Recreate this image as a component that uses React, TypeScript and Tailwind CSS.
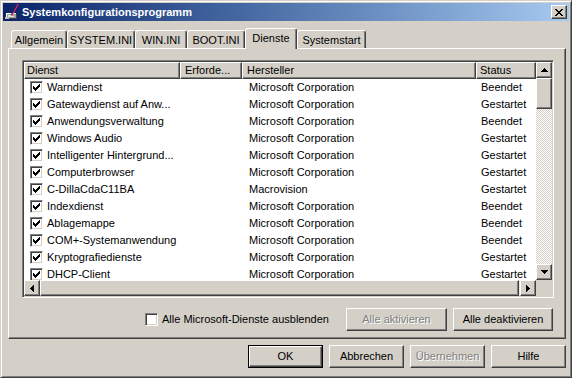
const rows = [
  { name: "Warndienst", maker: "Microsoft Corporation", status: "Beendet" },
  { name: "Gatewaydienst auf Anw...", maker: "Microsoft Corporation", status: "Gestartet" },
  { name: "Anwendungsverwaltung", maker: "Microsoft Corporation", status: "Beendet" },
  { name: "Windows Audio", maker: "Microsoft Corporation", status: "Gestartet" },
  { name: "Intelligenter Hintergrund...", maker: "Microsoft Corporation", status: "Gestartet" },
  { name: "Computerbrowser", maker: "Microsoft Corporation", status: "Gestartet" },
  { name: "C-DillaCdaC11BA", maker: "Macrovision", status: "Gestartet" },
  { name: "Indexdienst", maker: "Microsoft Corporation", status: "Beendet" },
  { name: "Ablagemappe", maker: "Microsoft Corporation", status: "Beendet" },
  { name: "COM+-Systemanwendung", maker: "Microsoft Corporation", status: "Beendet" },
  { name: "Kryptografiedienste", maker: "Microsoft Corporation", status: "Gestartet" },
  { name: "DHCP-Client", maker: "Microsoft Corporation", status: "Gestartet" },
];

const tabs = [
  { label: "Allgemein", w: "w-[56px]" },
  { label: "SYSTEM.INI", w: "w-[68px]" },
  { label: "WIN.INI", w: "w-[52px]" },
  { label: "BOOT.INI", w: "w-[58px]" },
  { label: "Dienste", w: "w-[52px]", active: true },
  { label: "Systemstart", w: "w-[69px]" },
];

// classic 3d frames
const raised =
  "bg-[#d4d0c8] border border-t-white border-l-white border-r-[#404040] border-b-[#404040] shadow-[inset_-1px_-1px_0_#808080]";
const sunken =
  "border border-t-[#808080] border-l-[#808080] border-r-white border-b-white shadow-[inset_1px_1px_0_#404040,inset_-1px_-1px_0_#d4d0c8]";
const track =
  "bg-[image:repeating-conic-gradient(#d4d0c8_0%_25%,#ffffff_0%_50%)] bg-[length:2px_2px]";

const CheckMark = () => (
  <svg width="7" height="7" viewBox="0 0 7 7" shapeRendering="crispEdges">
    <path
      d="M0 2h1v3H0zM1 3h1v3H1zM2 4h1v3H2zM3 3h1v3H3zM4 2h1v3H4zM5 1h1v3H5zM6 0h1v3H6z"
      fill="#000"
    />
  </svg>
);

const Checkbox = ({ checked }: { checked: boolean }) => (
  <div
    className={`w-[13px] h-[13px] shrink-0 bg-white flex items-center justify-center ${sunken}`}
  >
    {checked && <CheckMark />}
  </div>
);

const Arrow = ({ dir }: { dir: "up" | "down" | "left" | "right" }) => {
  const paths = {
    up: "M3 0h1v1H3zM2 1h3v1H2zM1 2h5v1H1zM0 3h7v1H0z",
    down: "M0 0h7v1H0zM1 1h5v1H1zM2 2h3v1H2zM3 3h1v1H3z",
    left: "M3 0h1v7H3zM2 1h1v5H2zM1 2h1v3H1zM0 3h1v1H0z",
    right: "M0 0h1v7H0zM1 1h1v5H1zM2 2h1v3H2zM3 3h1v1H3z",
  };
  const vertical = dir === "up" || dir === "down";
  return (
    <svg
      width={vertical ? 7 : 4}
      height={vertical ? 4 : 7}
      viewBox={vertical ? "0 0 7 4" : "0 0 4 7"}
      shapeRendering="crispEdges"
    >
      <path d={paths[dir]} fill="#000" />
    </svg>
  );
};

const ScrollButton = ({ dir }: { dir: "up" | "down" | "left" | "right" }) => (
  <div className={`w-[16px] h-[16px] shrink-0 flex items-center justify-center ${raised}`}>
    <Arrow dir={dir} />
  </div>
);

const Button = ({
  label,
  w,
  disabled,
  isDefault,
}: {
  label: string;
  w: string;
  disabled?: boolean;
  isDefault?: boolean;
}) => (
  <div className={`${w} h-[23px] shrink-0 ${isDefault ? "border border-black" : ""}`}>
    <div
      className={`w-full h-full flex items-center justify-center ${raised} ${
        disabled ? "text-[#808080] [text-shadow:1px_1px_0_#ffffff]" : ""
      }`}
    >
      {label}
    </div>
  </div>
);

const AppIcon = () => (
  <svg width="16" height="16" viewBox="0 0 16 16" shapeRendering="crispEdges">
    <path d="M2 9h10v5H2z" fill="#a0a0a0" />
    <path d="M2 9h10v1H2zM2 9h1v5H2z" fill="#ffffff" />
    <path d="M3 14h10v1H3zM12 10h1v5h-1z" fill="#404040" />
    <path d="M4 11h3v1H4zM4 12h6v1H4z" fill="#e0e0e0" />
    <path d="M1 13h4v2H1z" fill="#c0c0c0" />
    <path d="M14 0l-6 11" stroke="#e0208a" strokeWidth="1.5" shapeRendering="auto" />
    <path d="M13 0l-6 11" stroke="#202020" strokeWidth="0.8" shapeRendering="auto" />
  </svg>
);

const CloseGlyph = () => (
  <svg width="8" height="7" viewBox="0 0 8 7" shapeRendering="crispEdges">
    <path
      d="M0 0h2v1H0zM6 0h2v1H6zM1 1h2v1H1zM5 1h2v1H5zM2 2h4v1H2zM3 3h2v1H3zM2 4h4v1H2zM1 5h2v1H1zM5 5h2v1H5zM0 6h2v1H0zM6 6h2v1H6z"
      fill="#000"
    />
  </svg>
);

export default function App() {
  return (
    <div className="w-[574px] h-[384px] bg-white font-['Liberation_Sans',Arial,sans-serif] text-[11px] text-black leading-none">
      <div className="w-[572px] h-[378px] bg-[#d4d0c8] border border-t-[#d4d0c8] border-l-[#d4d0c8] border-r-[#404040] border-b-[#404040] shadow-[inset_1px_1px_0_#ffffff,inset_-1px_-1px_0_#808080] p-[2px] flex flex-col">
        {/* Title bar */}
        <div className="h-[18px] shrink-0 bg-gradient-to-r from-[#0a246a] to-[#a6caf0] flex items-center pl-[1px] pr-[2px]">
          <AppIcon />
          <span className="ml-[2px] text-white font-bold text-[11px]">
            Systemkonfigurationsprogramm
          </span>
          <div className={`ml-auto w-[16px] h-[14px] flex items-center justify-center ${raised}`}>
            <CloseGlyph />
          </div>
        </div>

        <div className="flex flex-col pl-[5px] pr-[3px]">
          {/* Tabs */}
          <div className="mt-[7px] h-[20px] flex items-end pl-[3px]">
            {tabs.map((t) =>
              t.active ? (
                <div
                  key={t.label}
                  className={`${t.w} h-[21px] -mb-[1px] relative z-10 bg-[#d4d0c8] border-t border-l border-t-white border-l-white border-r border-r-[#404040] shadow-[inset_-1px_0_0_#808080] rounded-t-[3px] flex items-start justify-center pt-[4px]`}
                >
                  {t.label}
                </div>
              ) : (
                <div
                  key={t.label}
                  className={`${t.w} h-[18px] bg-[#d4d0c8] border-t border-l border-t-white border-l-white border-r border-r-[#404040] shadow-[inset_-1px_0_0_#808080] rounded-t-[3px] flex items-center justify-center pt-[1px]`}
                >
                  {t.label}
                </div>
              )
            )}
          </div>

          {/* Tab panel */}
          <div className="h-[291px] border border-t-white border-l-white border-r-[#404040] border-b-[#404040] shadow-[inset_-1px_-1px_0_#808080] pl-[13px] pt-[11px] flex flex-col">
            {/* List view */}
            <div className={`w-[532px] h-[238px] p-[1px] ${sunken}`}>
              <div className="w-full h-full flex flex-col">
                <div className="h-[218px] flex">
                  <div className="flex-1 bg-white overflow-hidden flex flex-col">
                    {/* header */}
                    <div className="h-[17px] shrink-0 flex">
                      <div className={`w-[156px] shrink-0 flex items-center pl-[2px] ${raised}`}>
                        Dienst
                      </div>
                      <div className={`w-[62px] shrink-0 flex items-center pl-[4px] ${raised}`}>
                        Erforde...
                      </div>
                      <div className={`w-[234px] shrink-0 flex items-center pl-[4px] ${raised}`}>
                        Hersteller
                      </div>
                      <div className={`w-[60px] shrink-0 flex items-center pl-[3px] ${raised}`}>
                        Status
                      </div>
                    </div>
                    {/* rows */}
                    {rows.map((r) => (
                      <div key={r.name} className="h-[17px] shrink-0 flex items-center">
                        <div className="w-[156px] shrink-0 flex items-center pl-[6px] whitespace-nowrap">
                          <Checkbox checked />
                          <span className="ml-[4px]">{r.name}</span>
                        </div>
                        <div className="w-[62px] shrink-0" />
                        <div className="w-[234px] shrink-0 pl-[7px] whitespace-nowrap">
                          {r.maker}
                        </div>
                        <div className="w-[60px] shrink-0 pl-[5px] whitespace-nowrap">
                          {r.status}
                        </div>
                      </div>
                    ))}
                  </div>
                  {/* vertical scrollbar */}
                  <div className="w-[16px] shrink-0 flex flex-col">
                    <ScrollButton dir="up" />
                    <div className={`h-[31px] shrink-0 ${raised}`} />
                    <div className={`flex-1 ${track}`} />
                    <ScrollButton dir="down" />
                  </div>
                </div>
                {/* horizontal scrollbar */}
                <div className="h-[16px] shrink-0 flex">
                  <ScrollButton dir="left" />
                  <div className={`flex-1 ${raised}`} />
                  <div className={`w-[1px] shrink-0 ${track}`} />
                  <ScrollButton dir="right" />
                  <div className="w-[16px] shrink-0 bg-[#d4d0c8]" />
                </div>
              </div>
            </div>

            {/* below list */}
            <div className="mt-[10px] w-[531px] flex items-center">
              <div className="ml-[123px] flex items-center">
                <Checkbox checked={false} />
                <span className="ml-[4px] whitespace-nowrap">Alle Microsoft-Dienste ausblenden</span>
              </div>
              <div className="ml-auto flex gap-[6px]">
                <Button label="Alle aktivieren" w="w-[101px]" disabled />
                <Button label="Alle deaktivieren" w="w-[100px]" />
              </div>
            </div>
          </div>

          {/* dialog buttons */}
          <div className="mt-[6px] flex justify-end gap-[6px]">
            <Button label="OK" w="w-[75px]" isDefault />
            <Button label="Abbrechen" w="w-[75px]" />
            <Button label="Übernehmen" w="w-[75px]" disabled />
            <Button label="Hilfe" w="w-[75px]" />
          </div>
        </div>
      </div>
    </div>
  );
}
